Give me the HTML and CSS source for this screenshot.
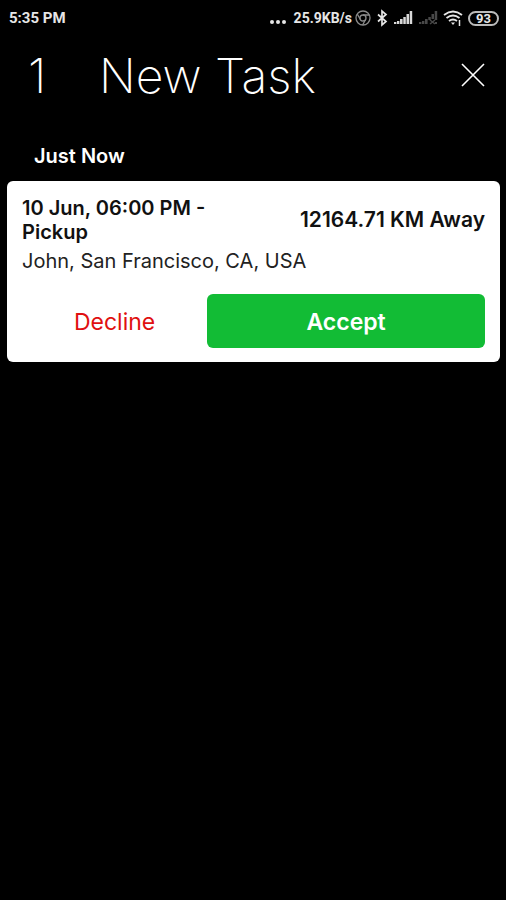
FILE: index.html
```html
<!DOCTYPE html>
<html lang="en">
<head>
  <meta charset="UTF-8">
  <meta name="viewport" content="width=device-width, initial-scale=1">
  <title>New Task</title>
  <link rel="stylesheet" href="styles.css">
</head>

<body>

<!-- Status bar -->
<div class="status-bar">
  <span class="clock">5:35 PM</span>
  <div class="status-icons">
    <svg class="dots" width="18" height="18" viewBox="0 0 18 18" fill="#e6e6e6">
      <circle cx="3" cy="13" r="2"/>
      <circle cx="9" cy="13" r="2"/>
      <circle cx="15" cy="13" r="2"/>
    </svg>
    <span class="speed">25.9KB/s</span>
    <svg class="chrome" width="16" height="18" viewBox="0 0 16 18" fill="none" stroke="#8a8a8a" stroke-width="1.3">
      <circle cx="8" cy="9" r="7"/>
      <circle cx="8" cy="9" r="3"/>
      <path d="M8 6h6.3M5.4 10.5L2.3 5.2M10.6 10.5L7.6 16"/>
    </svg>
    <svg class="bluetooth" width="12" height="18" viewBox="0 0 12 18" fill="none" stroke="#e6e6e6" stroke-width="1.7">
      <path d="M2 5.5l8 7-4 3.5V2l4 3.5-8 7"/>
    </svg>
    <svg class="signal" width="20" height="18" viewBox="0 0 20 18" fill="#d8d8d8">
      <path d="M1 13h2.4v2H1zM4 12h2.4v3H4zM7 10h2.6v5H7zM10.300 8h2.500v7h-2.500zM13.500 5H16v10h-2.500zM16.700 2h2.500v13h-2.500z"/>
    </svg>
    <svg class="signal" width="20" height="18" viewBox="0 0 20 18" fill="#484848">
      <path d="M1 13h2.4v2H1zM4 12h2.4v3H4zM7 10h2.6v5H7zM10.300 8h2.500v3h-2.500zM13.500 5H16v5h-2.500zM16.700 2h2.500v9h-2.500z"/>
      <path d="M12 11l5 4M17 11l-5 4" stroke="#484848" stroke-width="1.5"/>
      <path d="M17 13h2v2h-2z"/>
    </svg>
    <svg class="wifi" width="20" height="18" viewBox="0 0 20 18" fill="none" stroke="#e6e6e6" stroke-width="1.8">
      <path d="M1 6Q10-1 19 6M3.500 9Q10 4 16.500 9M6 12Q10 9 14 12"/>
      <path d="M8 13.500h4L10 16z" fill="#e6e6e6" stroke="none"/>
      <path d="M16.500 11v6" stroke-width="1.5"/>
    </svg>
    <span class="battery">93</span>
  </div>
</div>

<!-- Header -->
<header class="header">
  <span class="count">1</span>
  <h1>New Task</h1>
  <button class="close-button" aria-label="Close">
    <svg width="24" height="24" viewBox="0 0 24 24" fill="none" stroke="#fff" stroke-width="1.6">
      <path d="M1 1l22 22M23 1L1 23"/>
    </svg>
  </button>
</header>

<!-- Tasks -->
<main class="tasks">
  <h2>Just Now</h2>

  <div class="card">
    <div class="card-top">
      <h3>10 Jun, 06:00 PM - Pickup</h3>
      <span class="distance">12164.71 KM Away</span>
    </div>
    <p class="address">John, San Francisco, CA, USA</p>
    <div class="buttons">
      <button class="decline">Decline</button>
      <button class="accept">Accept</button>
    </div>
  </div>
</main>

</body>
</html>
```
FILE: styles.css
```css
* {
  box-sizing: border-box;
}

body {
  margin: 0;
  background-color: #000;
  color: #fff;
  font-family: Inter, "Open Sans", sans-serif;
}

h1, h2, h3, p {
  margin: 0;
}

button {
  border: none;
  background: none;
  padding: 0;
  font-family: inherit;
  cursor: pointer;
}

.status-bar {
  display: flex;
  justify-content: space-between;
  align-items: center;
  height: 36px;
  padding: 0 7px 0 9px;
  font-family: Roboto, sans-serif;
  font-size: 15px;
  font-weight: bold;
  color: #e6e6e6;
}

.status-icons {
  display: flex;
  align-items: center;
  gap: 5px;
}

.status-icons svg {
  display: block;
}

.speed {
  margin-left: 2px;
  font-size: 14px;
}

.chrome {
  margin-left: -2px;
}

.battery {
  width: 31px;
  height: 15px;
  border: 2px solid #bbb;
  border-radius: 8px;
  font-size: 13px;
  line-height: 11px;
  text-align: center;
}

.header {
  display: flex;
  align-items: center;
  height: 78px;
  padding: 0 21px 0 28px;
  font-size: 48px;
  font-weight: 200;
}

.count {
  width: 71px;
}

h1 {
  flex: 1;
  font-size: 48px;
  font-weight: 200;
}

.close-button {
  height: 24px;
}

.close-button svg {
  display: block;
}

.tasks {
  padding: 30px 6px 0 7px;
}

h2 {
  padding-left: 27px;
  font-size: 20px;
  font-weight: 600;
  line-height: 24px;
}

.card {
  margin-top: 13px;
  padding: 15px 15px 14px;
  border-radius: 6px;
  background-color: #fff;
  color: #111;
}

.card-top {
  display: flex;
  justify-content: space-between;
  align-items: center;
  gap: 12px;
}

h3, .distance {
  font-size: 20px;
  font-weight: 600;
  line-height: 24px;
}

h3 {
  max-width: 216px;
}

.distance {
  font-size: 21px;
  white-space: nowrap;
}

.address {
  margin-top: 5px;
  font-size: 20px;
  line-height: 24px;
  color: #222;
}

.buttons {
  display: grid;
  grid-template-columns: 2fr 3fr;
  margin-top: 21px;
}

.buttons button {
  height: 54px;
  padding-top: 2px;
  border-radius: 6px;
  font-size: 23px;
}

.decline {
  color: #e01010;
}

.accept {
  background-color: #12bc35;
  color: #fff;
  font-weight: 600;
}
```
